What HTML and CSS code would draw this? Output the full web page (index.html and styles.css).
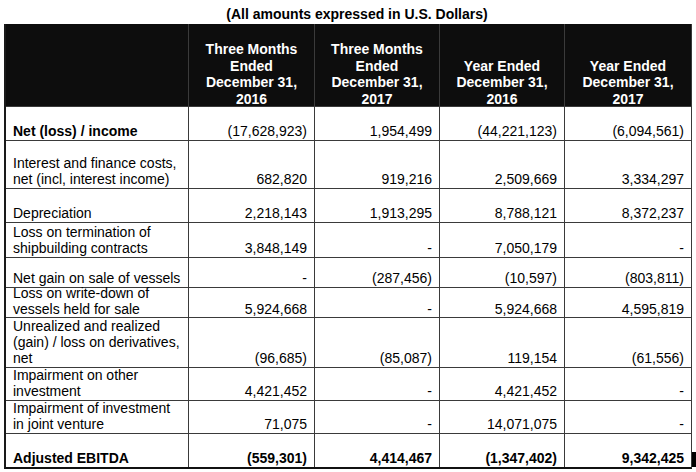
FILE: index.html
```html
<!DOCTYPE html>
<html lang="en">
<head>
<meta charset="utf-8">
<title>Adjusted EBITDA reconciliation</title>
<link rel="stylesheet" href="styles.css">
</head>
<body>
<div class="page">
  <div class="title">(All amounts expressed in U.S. Dollars)</div>
  <div class="sheet">
    <div class="cell head"></div>
    <div class="cell head"><span class="txt">Three Months<br>Ended<br>December 31,<br>2016</span></div>
    <div class="cell head"><span class="txt">Three Months<br>Ended<br>December 31,<br>2017</span></div>
    <div class="cell head"><span class="txt">Year Ended<br>December 31,<br>2016</span></div>
    <div class="cell head"><span class="txt">Year Ended<br>December 31,<br>2017</span></div>

    <div class="cell label bold">Net (loss) / income</div>
    <div class="cell num">(17,628,923)</div>
    <div class="cell num">1,954,499</div>
    <div class="cell num">(44,221,123)</div>
    <div class="cell num">(6,094,561)</div>

    <div class="cell label">Interest and finance costs,<br>net (incl, interest income)</div>
    <div class="cell num">682,820</div>
    <div class="cell num">919,216</div>
    <div class="cell num">2,509,669</div>
    <div class="cell num">3,334,297</div>

    <div class="cell label">Depreciation</div>
    <div class="cell num">2,218,143</div>
    <div class="cell num">1,913,295</div>
    <div class="cell num">8,788,121</div>
    <div class="cell num">8,372,237</div>

    <div class="cell label">Loss on termination of<br>shipbuilding contracts</div>
    <div class="cell num">3,848,149</div>
    <div class="cell num">-</div>
    <div class="cell num">7,050,179</div>
    <div class="cell num">-</div>

    <div class="cell label">Net gain on sale of vessels</div>
    <div class="cell num">-</div>
    <div class="cell num">(287,456)</div>
    <div class="cell num">(10,597)</div>
    <div class="cell num">(803,811)</div>

    <div class="cell label tight">Loss on write-down of<br>vessels held for sale</div>
    <div class="cell num tight">5,924,668</div>
    <div class="cell num tight">-</div>
    <div class="cell num tight">5,924,668</div>
    <div class="cell num tight">4,595,819</div>

    <div class="cell label">Unrealized and realized<br>(gain) / loss on derivatives,<br>net</div>
    <div class="cell num">(96,685)</div>
    <div class="cell num">(85,087)</div>
    <div class="cell num">119,154</div>
    <div class="cell num">(61,556)</div>

    <div class="cell label">Impairment on other<br>investment</div>
    <div class="cell num">4,421,452</div>
    <div class="cell num">-</div>
    <div class="cell num">4,421,452</div>
    <div class="cell num">-</div>

    <div class="cell label">Impairment of investment<br>in joint venture</div>
    <div class="cell num">71,075</div>
    <div class="cell num">-</div>
    <div class="cell num">14,071,075</div>
    <div class="cell num">-</div>

    <div class="cell label bold">Adjusted EBITDA</div>
    <div class="cell num bold">(559,301)</div>
    <div class="cell num bold">4,414,467</div>
    <div class="cell num bold">(1,347,402)</div>
    <div class="cell num bold">9,342,425</div>

    <div class="mark"></div>
  </div>
</div>
</body>
</html>
```

FILE: styles.css
```css
html, body {
  margin: 0;
  padding: 0;
  background: #fff;
}

.page {
  width: 696px;
  height: 472px;
  font-family: "Liberation Sans", Arial, sans-serif;
  font-size: 14px;
  color: #000;
}

.title {
  box-sizing: border-box;
  height: 24px;
  padding: 6px 0 0 18px;
  text-align: center;
  font-weight: bold;
  line-height: 16px;
}

.sheet {
  position: relative;
  display: grid;
  width: max-content;
  margin-left: 4px;
  grid-template-columns: 182px 125px 124px 124px 126px;
  grid-template-rows: 82px 33px 47px 33px 34px 29px 29px 49px 32px 32px 33px;
  gap: 1px;
  background: #3a3a3a;
  border-left: 2px solid #1a1a1a;
  border-right: 1px solid #3a3a3a;
  border-bottom: 2px solid #111;
}

.cell {
  display: flex;
  align-items: flex-end;
  background: #fff;
  line-height: 16px;
  padding-bottom: 1px;
  box-sizing: border-box;
  min-height: 0;
}

.head {
  background: #0d0d0d;
  color: #fff;
  font-weight: bold;
  justify-content: center;
  text-align: center;
  line-height: 16.5px;
  padding-bottom: 0;
}

.head .txt {
  margin-bottom: -1px;
}

.label {
  justify-content: flex-start;
  padding-left: 7px;
}

.num {
  justify-content: flex-end;
  padding-right: 7px;
}

.tight {
  padding-bottom: 0;
  line-height: 15.5px;
}

.bold {
  font-weight: bold;
}

.mark {
  position: absolute;
  right: -6px;
  bottom: 0;
  width: 5px;
  height: 15px;
  background: #000;
}
```
